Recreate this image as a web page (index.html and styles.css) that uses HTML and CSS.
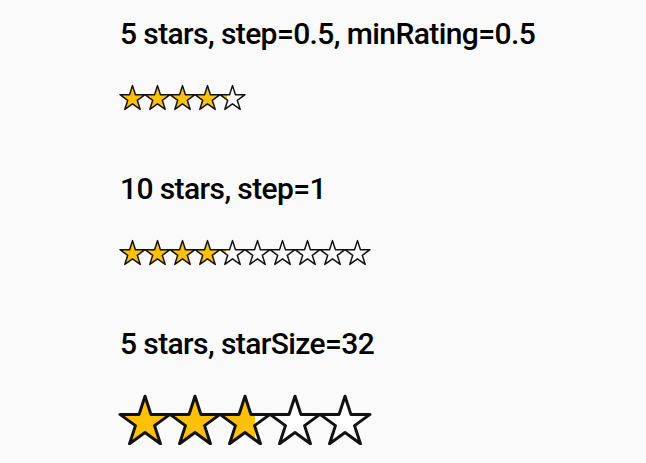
FILE: index.html
```html
<!DOCTYPE html>
<html lang="en">
<head>
<meta charset="utf-8">
<title>Star rating examples</title>
<link rel="stylesheet" href="styles.css">
</head>
<body>
<svg class="defs" width="0" height="0" aria-hidden="true">
  <defs>
    <polygon id="star-shape" points="50,2.43 61.8,38.75 100,38.75 69.1,61.21 80.9,97.53 50,75.08 19.1,97.53 30.9,61.21 0,38.75 38.2,38.75"/>
    <linearGradient id="fill-27" x1="0" x2="1" y1="0" y2="0">
      <stop offset="0.27" stop-color="#ffc107"/>
      <stop offset="0.27" stop-color="#ffffff"/>
    </linearGradient>
    <linearGradient id="fill-25" x1="0" x2="1" y1="0" y2="0">
      <stop offset="0.25" stop-color="#ffc107"/>
      <stop offset="0.25" stop-color="#ffffff"/>
    </linearGradient>
    <linearGradient id="fill-70" x1="0" x2="1" y1="0" y2="0">
      <stop offset="0.70" stop-color="#ffc107"/>
      <stop offset="0.70" stop-color="#ffffff"/>
    </linearGradient>
  </defs>
</svg>

<main class="demo">
  <section class="example">
    <h2 class="example-title">5 stars, step=0.5, minRating=0.5</h2>
    <div class="rating rating--small" role="img" aria-label="Rating 4 of 5">
      <svg class="star star--full" viewBox="0 0 100 100"><use href="#star-shape"/></svg>
      <svg class="star star--full" viewBox="0 0 100 100"><use href="#star-shape"/></svg>
      <svg class="star star--full" viewBox="0 0 100 100"><use href="#star-shape"/></svg>
      <svg class="star star--full" viewBox="0 0 100 100"><use href="#star-shape"/></svg>
      <svg class="star star--partial-27" viewBox="0 0 100 100"><use href="#star-shape"/></svg>
    </div>
  </section>

  <section class="example">
    <h2 class="example-title">10 stars, step=1</h2>
    <div class="rating rating--small" role="img" aria-label="Rating 4 of 10">
      <svg class="star star--full" viewBox="0 0 100 100"><use href="#star-shape"/></svg>
      <svg class="star star--full" viewBox="0 0 100 100"><use href="#star-shape"/></svg>
      <svg class="star star--full" viewBox="0 0 100 100"><use href="#star-shape"/></svg>
      <svg class="star star--full" viewBox="0 0 100 100"><use href="#star-shape"/></svg>
      <svg class="star star--partial-25" viewBox="0 0 100 100"><use href="#star-shape"/></svg>
      <svg class="star star--empty" viewBox="0 0 100 100"><use href="#star-shape"/></svg>
      <svg class="star star--empty" viewBox="0 0 100 100"><use href="#star-shape"/></svg>
      <svg class="star star--empty" viewBox="0 0 100 100"><use href="#star-shape"/></svg>
      <svg class="star star--empty" viewBox="0 0 100 100"><use href="#star-shape"/></svg>
      <svg class="star star--empty" viewBox="0 0 100 100"><use href="#star-shape"/></svg>
    </div>
  </section>

  <section class="example">
    <h2 class="example-title">5 stars, starSize=32</h2>
    <div class="rating rating--large" role="img" aria-label="Rating 3 of 5">
      <svg class="star star--full" viewBox="0 0 100 100"><use href="#star-shape"/></svg>
      <svg class="star star--full" viewBox="0 0 100 100"><use href="#star-shape"/></svg>
      <svg class="star star--partial-70" viewBox="0 0 100 100"><use href="#star-shape"/></svg>
      <svg class="star star--empty" viewBox="0 0 100 100"><use href="#star-shape"/></svg>
      <svg class="star star--empty" viewBox="0 0 100 100"><use href="#star-shape"/></svg>
    </div>
  </section>
</main>
</body>
</html>
```

FILE: styles.css
```css
html, body {
  margin: 0;
  padding: 0;
  background: #fafafa;
}

body {
  font-family: Roboto, "Noto Sans", "Liberation Sans", sans-serif;
  color: #000;
}

.defs {
  position: absolute;
  width: 0;
  height: 0;
  overflow: hidden;
}

.demo {
  display: flex;
  flex-direction: column;
  gap: 61px;
  padding: 16px 0 0 120px;
}

.example {
  display: flex;
  flex-direction: column;
  align-items: flex-start;
  gap: 33px;
}

.example-title {
  margin: 0;
  font-size: 30px;
  line-height: 36px;
  font-weight: 500;
  letter-spacing: -0.6px;
  white-space: nowrap;
}

.rating {
  display: flex;
}

.star {
  display: block;
  overflow: visible;
  flex: none;
}

.rating--small .star {
  width: 25px;
  height: 25px;
}

.rating--large .star {
  width: 50px;
  height: 50px;
}

.star use {
  stroke: #111;
  stroke-width: 6;
  stroke-linejoin: round;
}

.star--full use { fill: #ffc107; }
.star--empty use { fill: #ffffff; }
.star--partial-27 use { fill: url(#fill-27); }
.star--partial-25 use { fill: url(#fill-25); }
.star--partial-70 use { fill: url(#fill-70); }
```
